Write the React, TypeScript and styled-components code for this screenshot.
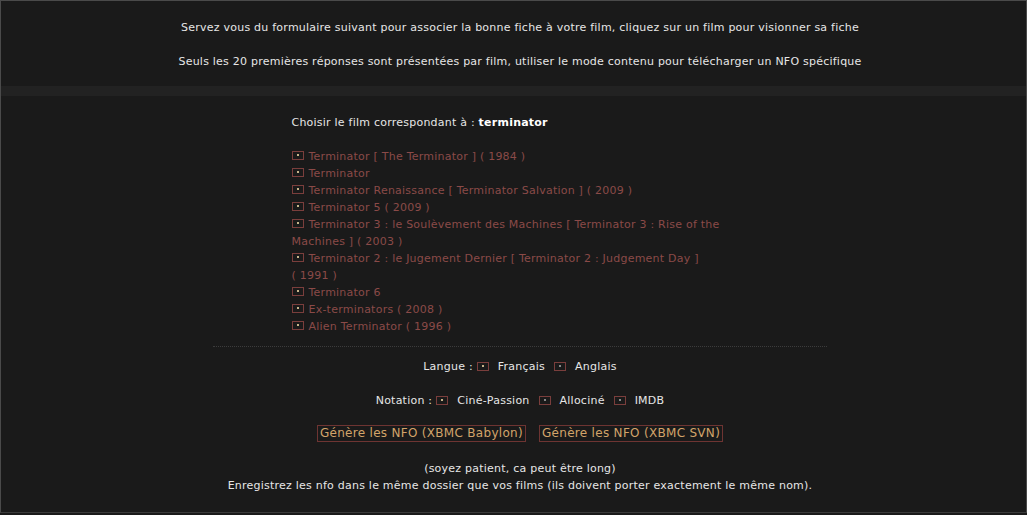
import React from "react";
import styled, { createGlobalStyle } from "styled-components";

const Global = createGlobalStyle`
  html, body { margin: 0; padding: 0; background: #1a1a1a; }
  body {
    font-family: "DejaVu Sans", Verdana, sans-serif;
    font-size: 11px;
    letter-spacing: 0.23px;
    color: #e6e6e6;
  }
`;

const Frame = styled.div`
  box-sizing: border-box;
  width: 1027px;
  height: 513px;
  border: 1px solid #4a4a4a;
  border-bottom-color: #3a3a3a;
  background: #1a1a1a;
  display: flex;
  flex-direction: column;
`;

const Header = styled.div`
  height: 85px;
  display: flex;
  flex-direction: column;
  align-items: center;
  padding: 20px 0 0 13px;
  box-sizing: border-box;
  gap: 21px;
`;

const Line = styled.p`
  margin: 0;
  line-height: 13px;
  text-align: center;
`;

const Stripe = styled.div`
  height: 10px;
  background: #222222;
`;

const Main = styled.div`
  display: flex;
  flex-direction: column;
  align-items: center;
  padding: 20px 0 0 13px;
`;

const Column = styled.div`
  width: 445px;
  margin-right: 12px;
`;

const Title = styled.div`
  line-height: 13px;
  margin-bottom: 19px;
  b { color: #fff; }
`;

const List = styled.ul`
  list-style: none;
  margin: 0;
  padding: 0;
`;

const Item = styled.li`
  line-height: 17px;
  color: #8a4a48;
  cursor: pointer;
`;

const Box = styled.span<{ $tone?: string; $gap?: number }>`
  display: inline-block;
  box-sizing: border-box;
  width: 12px;
  height: 9px;
  border: 1px solid #7a3e3c;
  position: relative;
  vertical-align: 0px;
  margin-right: ${(p) => (p.$gap ?? 5)}px;
  &::after {
    content: "";
    position: absolute;
    left: 4px;
    top: 2px;
    width: 2px;
    height: 2px;
    background: ${(p) => p.$tone || "#c8b48a"};
  }
`;

const Separator = styled.div`
  width: 614px;
  border-top: 1px dotted #3c3c3c;
  margin-top: 11px;
`;

const OptionRow = styled.div`
  display: flex;
  align-items: center;
  justify-content: center;
  line-height: 13px;
  margin-top: 13px;
  & + & { margin-top: 21px; }
`;

const Label = styled.span`
  margin-right: 4px;
`;

const Opt = styled.span`
  margin-right: 9px;
  &:last-child { margin-right: 0; }
`;

const Buttons = styled.div`
  display: flex;
  gap: 13px;
  justify-content: center;
  margin-top: 18px;
`;

const Btn = styled.button`
  font: inherit;
  font-size: 12px;
  letter-spacing: 0.3px;
  color: #d2a46a;
  background: transparent;
  border: 1px solid #6e3432;
  padding: 0 2px;
  line-height: 15px;
  cursor: pointer;
`;

const Note = styled.div`
  margin-top: 18px;
  text-align: center;
  line-height: 17px;
`;

const nb = (s: string) => s.replace(/\( (\d{4}) \)/g, "(\u00a0$1\u00a0)");

const films = [
  "Terminator [ The Terminator ] ( 1984 )",
  "Terminator",
  "Terminator Renaissance [ Terminator Salvation ] ( 2009 )",
  "Terminator 5 ( 2009 )",
  "Terminator 3 : le Soulèvement des Machines [ Terminator 3 : Rise of the Machines ] ( 2003 )",
  "Terminator 2 : le Jugement Dernier [ Terminator 2 : Judgement Day ] ( 1991 )",
  "Terminator 6",
  "Ex-terminators ( 2008 )",
  "Alien Terminator ( 1996 )",
];

export default function App() {
  return (
    <>
      <Global />
      <Frame>
        <Header>
          <Line>Servez vous du formulaire suivant pour associer la bonne fiche à votre film, cliquez sur un film pour visionner sa fiche</Line>
          <Line>Seuls les 20 premières réponses sont présentées par film, utiliser le mode contenu pour télécharger un NFO spécifique</Line>
        </Header>
        <Stripe />
        <Main>
          <Column>
            <Title>
              Choisir le film correspondant à : <b>terminator</b>
            </Title>
            <List>
              {films.map((f) => (
                <Item key={f}>
                  <Box />
                  {nb(f)}
                </Item>
              ))}
            </List>
          </Column>
          <Separator />
          <OptionRow>
            <Label>Langue :</Label>
            <Box $gap={9} />
            <Opt>Français</Opt>
            <Box $tone="#888" $gap={9} />
            <Opt>Anglais</Opt>
          </OptionRow>
          <OptionRow>
            <Label>Notation :</Label>
            <Box $gap={9} />
            <Opt>Ciné-Passion</Opt>
            <Box $tone="#888" $gap={9} />
            <Opt>Allociné</Opt>
            <Box $tone="#888" $gap={9} />
            <Opt>IMDB</Opt>
          </OptionRow>
          <Buttons>
            <Btn>Génère les NFO (XBMC Babylon)</Btn>
            <Btn>Génère les NFO (XBMC SVN)</Btn>
          </Buttons>
          <Note>
            (soyez patient, ca peut être long)
            <br />
            Enregistrez les nfo dans le même dossier que vos films (ils doivent porter exactement le même nom).
          </Note>
        </Main>
      </Frame>
    </>
  );
}
